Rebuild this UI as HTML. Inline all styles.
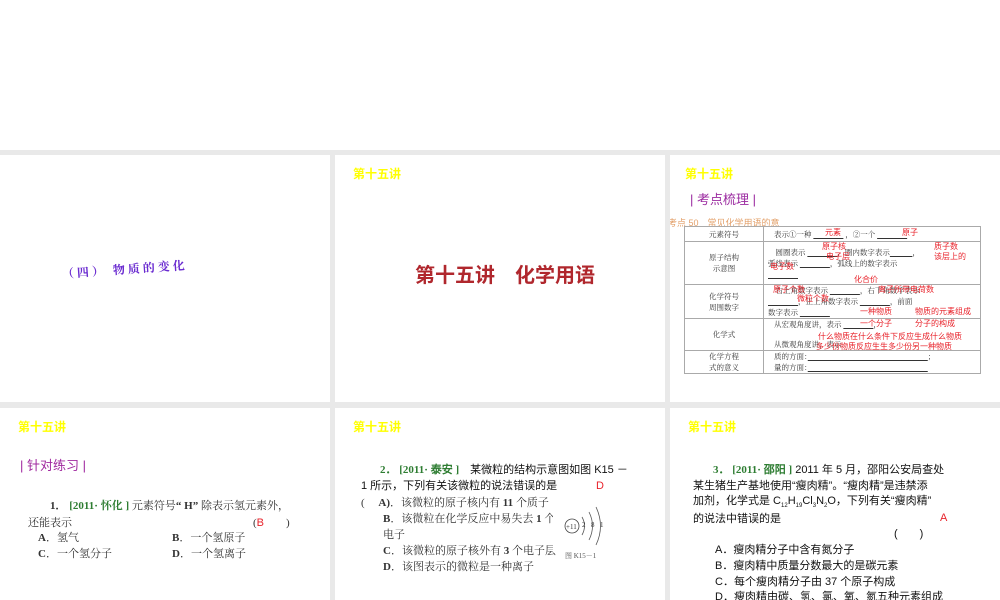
<!DOCTYPE html>
<html><head><meta charset="utf-8"><style>
*{margin:0;padding:0;box-sizing:border-box}
body{width:1000px;height:600px;background:#e9e9e9;position:relative;overflow:hidden;font-family:"Liberation Serif","Noto Serif CJK SC",serif;}
.top{position:absolute;left:0;top:0;width:1000px;height:150px;background:#fff}
.p{position:absolute;background:#fff;overflow:hidden}
.a{position:absolute;white-space:nowrap}
.y{color:#ffff00;font-family:"Liberation Sans","Noto Sans CJK SC",sans-serif;font-size:12px;font-weight:bold}
.s{font-family:"Liberation Sans","Noto Sans CJK SC",sans-serif}
.r{color:#e8222a;font-family:"Liberation Sans","Noto Sans CJK SC",sans-serif;font-size:8px}
table{border-collapse:collapse;position:absolute;left:14px;top:71px;width:297px;font-size:7.5px;color:#333}
td{border:1px solid #aaa;vertical-align:middle}
td.l{width:79px;text-align:center}
</style></head><body>
<div class="top"></div>

<div class="p" style="left:0;top:155px;width:330px;height:247px">
 <div class="a" style="left:62px;top:110px;color:#6a2bd0;font-size:12px;font-weight:bold;letter-spacing:3px;transform:rotate(-4deg);transform-origin:left">（四） 物质的变化</div>
</div>

<div class="p" style="left:335px;top:155px;width:330px;height:247px">
 <div class="a y" style="left:18px;top:10px">第十五讲</div>
 <div class="a s" style="left:80px;top:104px;color:#b0272d;font-size:20px;font-weight:bold">第十五讲　化学用语</div>
</div>

<div class="p" style="left:670px;top:155px;width:330px;height:247px">
 <div class="a y" style="left:15px;top:10px">第十五讲</div>
 <div class="a s" style="left:20px;top:34px;color:#9b2aa0;font-size:13px">| 考点梳理 |</div>
 <div class="a s" style="left:-2px;top:61px;color:#e3a06a;font-size:9px">考点 50　常见化学用语的意</div>
 <table>
  <tr style="height:15px"><td class="l">元素符号</td><td style="padding-left:10px">表示①一种 <u>　　　　</u> ，②一个 <u>　　　　</u></td></tr>
  <tr style="height:43px"><td class="l">原子结构<br>示意图</td><td style="padding-left:4px">　圆圈表示 <u>　　　　</u>，圈内数字表示<u>　　　</u>，<br>弧线表示 <u>　　　　</u>，弧线上的数字表示<br><u>　　　　</u></td></tr>
  <tr style="height:33px"><td class="l">化学符号<br>周围数字</td><td style="padding-left:4px">　右上角数字表示 <u>　　　　</u>，右下角数字表示<br><u>　　　　</u>，正上角数字表示 <u>　　　　</u>，前面<br>数字表示 <u>　　　　</u></td></tr>
  <tr style="height:32px"><td class="l">化学式</td><td style="padding-left:10px">从宏观角度讲，表示 <u>　　　　</u>，<br><br>从微观角度讲，表示</td></tr>
  <tr style="height:23px"><td class="l">化学方程<br>式的意义</td><td style="padding-left:10px">质的方面：<u>　　　　　　　　　　　　　　　　</u>；<br>量的方面：<u>　　　　　　　　　　　　　　　　</u></td></tr>
 </table>
 <div class="a r" style="left:155px;top:72px">元素</div>
 <div class="a r" style="left:232px;top:72px">原子</div>
 <div class="a r" style="left:152px;top:86px">原子核</div>
 <div class="a r" style="left:264px;top:86px">质子数</div>
 <div class="a r" style="left:156px;top:96px">电子层</div>
 <div class="a r" style="left:264px;top:96px">该层上的</div>
 <div class="a r" style="left:100px;top:106px">电子数</div>
 <div class="a r" style="left:184px;top:119px">化合价</div>
 <div class="a r" style="left:103px;top:129px">原子个数</div>
 <div class="a r" style="left:208px;top:129px">离子所带电荷数</div>
 <div class="a r" style="left:127px;top:138px">微粒个数</div>
 <div class="a r" style="left:190px;top:151px">一种物质</div>
 <div class="a r" style="left:245px;top:151px">物质的元素组成</div>
 <div class="a r" style="left:190px;top:163px">一个分子</div>
 <div class="a r" style="left:245px;top:163px">分子的构成</div>
 <div class="a r" style="left:148px;top:176px">什么物质在什么条件下反应生成什么物质</div>
 <div class="a r" style="left:146px;top:186px">多少份物质反应生生多少份另一种物质</div>
</div>

<div class="p" style="left:0;top:408px;width:330px;height:192px">
 <div class="a y" style="left:18px;top:10px">第十五讲</div>
 <div class="a s" style="left:20px;top:47px;color:#a0289f;font-size:13px">| 针对练习 |</div>
 <div class="a" style="left:50px;top:89px;font-size:11px;color:#333"><b>1．</b> <b style="color:#2e7d32">[2011· 怀化 ]</b> 元素符号<b>“ H”</b> 除表示氢元素外，</div>
 <div class="a" style="left:28px;top:106px;font-size:11px;color:#333">还能表示</div>
 <div class="a" style="left:253px;top:106px;font-size:11px;color:#333">(<span style="color:#e8222a;font-family:'Liberation Sans'">B</span>　　)</div>
 <div class="a" style="left:38px;top:121px;font-size:11px;color:#333"><b>A</b>．氢气</div>
 <div class="a" style="left:172px;top:121px;font-size:11px;color:#333"><b>B</b>．一个氢原子</div>
 <div class="a" style="left:38px;top:137px;font-size:11px;color:#333"><b>C</b>．一个氢分子</div>
 <div class="a" style="left:172px;top:137px;font-size:11px;color:#333"><b>D</b>．一个氢离子</div>
</div>

<div class="p" style="left:335px;top:408px;width:330px;height:192px">
 <div class="a y" style="left:18px;top:10px">第十五讲</div>
 <div class="a s" style="left:45px;top:53px;font-size:11px;color:#111"><b style="color:#2e7d32;font-family:'Liberation Serif'">2． [2011· 泰安 ]</b>　某微粒的结构示意图如图 K15 －</div>
 <div class="a s" style="left:26px;top:69px;font-size:11px;color:#111">1 所示，下列有关该微粒的说法错误的是</div>
 <div class="a s" style="left:261px;top:72px;font-size:11px;color:#e8222a">D</div>
 <div class="a" style="left:26px;top:86px;font-size:11px;color:#333">(　 <b>A)</b>．该微粒的原子核内有 <b>11</b> 个质子</div>
 <div class="a" style="left:48px;top:102px;font-size:11px;color:#333"><b>B</b>．该微粒在化学反应中易失去 <b>1</b> 个</div>
 <div class="a" style="left:48px;top:118px;font-size:11px;color:#333">电子</div>
 <div class="a" style="left:48px;top:134px;font-size:11px;color:#333"><b>C</b>．该微粒的原子核外有 <b>3</b> 个电子层</div>
 <div class="a" style="left:48px;top:150px;font-size:11px;color:#333"><b>D</b>．该图表示的微粒是一种离子</div>
 <div style="position:absolute;left:218px;top:94px;width:50px;height:50px;background:#fff"></div>
 <svg style="position:absolute;left:228px;top:95px" width="50" height="45"><circle cx="9" cy="23" r="7" fill="none" stroke="#444" stroke-width=".8"/><text x="3" y="26" font-size="7" fill="#333">+11</text><path d="M19 14q5 9 0 18M26 9q7 14 0 28M33 4q9 19 0 38" fill="none" stroke="#555" stroke-width=".8"/><text x="19" y="24" font-size="7" fill="#333">2</text><text x="28" y="24" font-size="7" fill="#333">8</text><text x="37" y="24" font-size="7" fill="#333">1</text></svg>
 <div class="a" style="left:230px;top:143px;font-size:7px;color:#555">图 K15－1</div>
</div>

<div class="p" style="left:670px;top:408px;width:330px;height:192px">
 <div class="a y" style="left:18px;top:10px">第十五讲</div>
 <div class="a s" style="left:43px;top:53px;font-size:11px;color:#111"><b style="color:#2e7d32;font-family:'Liberation Serif'">3． [2011· 邵阳 ]</b> 2011 年 5 月，邵阳公安局查处</div>
 <div class="a s" style="left:23px;top:69px;font-size:11px;color:#111">某生猪生产基地使用“瘦肉精”。“瘦肉精”是违禁添</div>
 <div class="a s" style="left:23px;top:84px;font-size:11px;color:#111">加剂，化学式是 C<sub style="font-size:6px">12</sub>H<sub style="font-size:6px">19</sub>Cl<sub style="font-size:6px">3</sub>N<sub style="font-size:6px">2</sub>O，下列有关“瘦肉精”</div>
 <div class="a s" style="left:23px;top:102px;font-size:11px;color:#111">的说法中错误的是</div>
 <div class="a s" style="left:270px;top:104px;font-size:11px;color:#e8222a">A</div>
 <div class="a s" style="left:224px;top:117px;font-size:11px;color:#111">(　　)</div>
 <div class="a s" style="left:45px;top:133px;font-size:11px;color:#111">A．瘦肉精分子中含有氮分子</div>
 <div class="a s" style="left:45px;top:149px;font-size:11px;color:#111">B．瘦肉精中质量分数最大的是碳元素</div>
 <div class="a s" style="left:45px;top:165px;font-size:11px;color:#111">C．每个瘦肉精分子由 37 个原子构成</div>
 <div class="a s" style="left:45px;top:180px;font-size:11px;color:#111">D．瘦肉精由碳、氢、氯、氧、氮五种元素组成</div>
</div>
</body></html>
